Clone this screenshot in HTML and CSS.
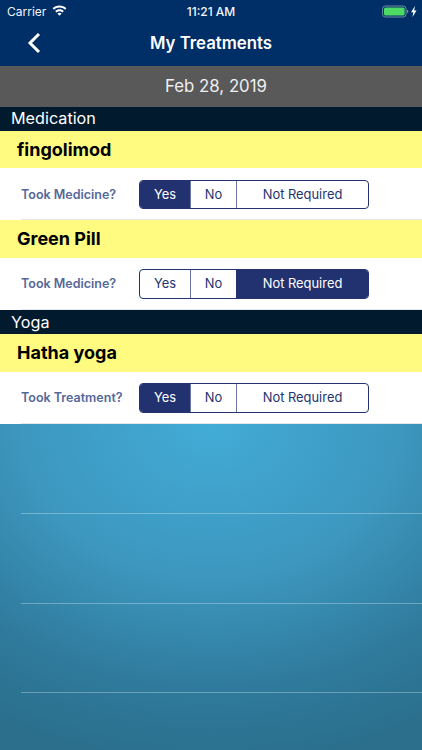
FILE: index.html
```html
<!DOCTYPE html>
<html lang="en">
<head>
<meta charset="utf-8">
<title>My Treatments</title>
<link rel="stylesheet" href="styles.css">
</head>
<body>
<div class="app">
  <header class="top">
    <div class="status">
      <div class="status-left">
        <span>Carrier</span>
        <svg class="wifi" width="15" height="11" viewBox="0 0 16 12"><path fill="#fff" d="M8 .6c2.900 0 5.500 1.100 7.500 3L14 5.200C12.400 3.700 10.300 2.800 8 2.800S3.600 3.700 2 5.200L.5 3.600C2.500 1.700 5.100.6 8 .6zM8 4.600c1.800 0 3.500.7 4.700 1.900l-1.500 1.600C10.300 7.300 9.200 6.800 8 6.800s-2.300.5-3.200 1.300L3.300 6.500C4.500 5.300 6.200 4.600 8 4.600zM8 8.400c.9 0 1.700.3 2.300.9L8 11.800 5.700 9.300c.6-.6 1.400-.9 2.300-.9z"/></svg>
      </div>
      <span class="clock">11:21 AM</span>
      <div class="status-right">
        <svg width="36" height="13" viewBox="0 0 36 13"><rect x="0.600" y="1" width="23.400" height="11" rx="2.800" fill="none" stroke="#6f8fa8" stroke-width="1"/><rect x="2" y="2.400" width="20.600" height="8.200" rx="1.500" fill="#4cd964"/><rect x="25" y="5" width="1.200" height="3" fill="#6f8fa8"/><path fill="#fff" d="M33 1l-4 6.300h2.300L30.500 12l4-6.500h-2.300z"/></svg>
      </div>
    </div>
    <div class="nav">
      <svg class="back" width="16" height="22" viewBox="0 0 16 22"><path d="M13 2 4 11l9 9" fill="none" stroke="#fff" stroke-width="3"/></svg>
      <h1>My Treatments</h1>
    </div>
  </header>
  <div class="date"><span>Feb 28, 2019</span></div>

  <div class="section">Medication</div>
  <div class="item">fingolimod</div>
  <div class="row">
    <span class="label">Took Medicine?</span>
    <div class="seg">
      <span class="opt yes on">Yes</span><span class="opt no">No</span><span class="opt nr">Not Required</span>
    </div>
  </div>
  <div class="sep"></div>
  <div class="item">Green Pill</div>
  <div class="row">
    <span class="label">Took Medicine?</span>
    <div class="seg">
      <span class="opt yes">Yes</span><span class="opt no">No</span><span class="opt nr on">Not Required</span>
    </div>
  </div>
  <div class="sep"></div>

  <div class="section yoga">Yoga</div>
  <div class="item">Hatha yoga</div>
  <div class="row">
    <span class="label">Took Treatment?</span>
    <div class="seg">
      <span class="opt yes on">Yes</span><span class="opt no">No</span><span class="opt nr">Not Required</span>
    </div>
  </div>
  <div class="sep"></div>

  <div class="empty">
    <div class="line"></div>
    <div class="line"></div>
    <div class="line"></div>
  </div>
</div>
</body>
</html>
```
FILE: styles.css
```css
* { box-sizing: border-box; }
html, body { margin: 0; padding: 0; }
body { font-family: Inter, "Liberation Sans", sans-serif; }
.app { width: 422px; height: 750px; overflow: hidden; display: flex; flex-direction: column; background: #fff; }

.top { height: 66px; background: #002e66; color: #fff; flex: none; }
.status { height: 22px; padding: 0 7px; display: grid; grid-template-columns: 1fr auto 1fr; align-items: center; font-size: 12px; color: #f2f5f8; }
.status-left { display: flex; align-items: center; gap: 6px; }
.wifi { display: block; margin-top: -2px; }
.clock { font-weight: 500; }
.status-right { display: flex; justify-content: flex-end; }
.status-right svg { display: block; margin-right: -3px; }
.nav { height: 44px; position: relative; display: flex; align-items: center; justify-content: center; padding-bottom: 2px; }
.nav h1 { margin: 0; font-size: 16.800px; font-weight: 600; color: #fff; }
.back { position: absolute; left: 26px; top: 10px; }

.date { height: 40.500px; flex: none; background: #595959; color: #f0f0f0; display: flex; align-items: center; justify-content: center; padding-left: 10px; font-size: 16.800px; }

.section { height: 24px; flex: none; background: #021a2e; color: #fff; font-size: 16.200px; line-height: 23px; padding-left: 11px; }
.section.yoga { height: 24.500px; line-height: 24px; }
.item { height: 37.500px; flex: none; background: #fffb80; color: #000; font-size: 18px; font-weight: 700; line-height: 38px; padding-left: 17px; }
.row { height: 51px; flex: none; background: #fff; display: flex; align-items: center; padding: 1px 0 0 21px; position: relative; }
.sep { height: 1px; flex: none; background: #e4e8ec; margin-left: 21px; }
.label { font-size: 12.500px; font-weight: 600; color: #55689a; }

.seg { position: absolute; left: 139px; top: 11.500px; width: 230px; height: 29.500px; display: flex; border: 1px solid #24336f; border-radius: 4px; overflow: hidden; background: #fff; }
.opt { display: flex; align-items: center; justify-content: center; font-size: 12.900px; color: #24336f; border-left: 1px solid #6a769f; }
.opt.yes { width: 50px; border-left: 0; }
.opt.no { width: 46px; }
.opt.nr { flex: 1; }
.opt.on { background: #22316f; color: #fff; border-left-color: #22316f; }

.empty { flex: 1; display: flex; flex-direction: column; padding-top: 89.500px; gap: 88.500px; background: radial-gradient(ellipse 420px 340px at 50% 0, #42acd6 0%, #3d97bf 45%, #2f7a9c 78%, #2b6f8d 100%); }
.line { height: 1px; flex: none; margin-left: 21px; background: rgba(255,255,255,.3); }
```
